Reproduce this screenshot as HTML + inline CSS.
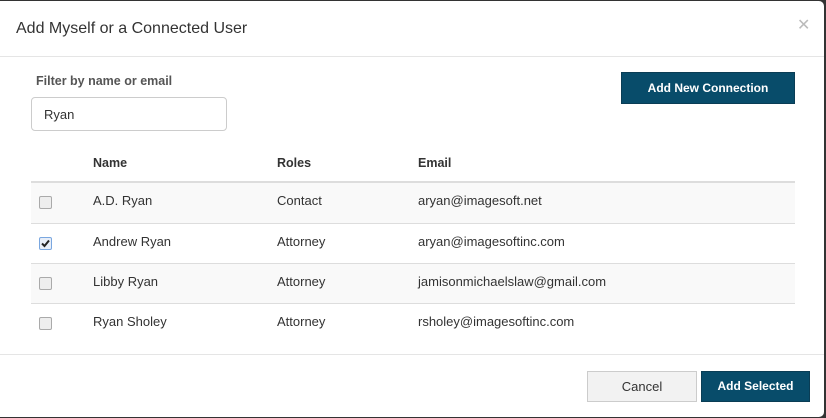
<!DOCTYPE html>
<html><head><style>
*{box-sizing:border-box;margin:0;padding:0}
body{width:826px;height:418px;background:#333;font-family:"Liberation Sans",sans-serif;overflow:hidden;position:relative}
.m{position:absolute;left:0;top:1px;width:824px;height:416px;background:#fff;border-radius:0 5px 5px 0}
.t{position:absolute;left:16px;top:19px;font-size:16px;color:#333}
.x{position:absolute;left:797px;top:14px;font-size:16px;color:#bbb}
.hl{position:absolute;left:0;width:824px;height:1px;background:#e5e5e5}
.lbl{position:absolute;left:36px;top:73px;font-size:12.5px;font-weight:bold;color:#555}
.in{position:absolute;left:31px;top:96px;width:196px;height:34px;border:1px solid #ccc;border-radius:4px;font-size:13px;color:#333;padding:9px 12px}
.btn{position:absolute;background:#084c6a;color:#fff;font-size:12px;font-weight:bold;text-align:center;border:1px solid #0a3d55}
.th{position:absolute;top:155px;font-size:12.5px;font-weight:bold;color:#333}
.row{position:absolute;left:31px;width:764px;height:40px;border-top:1px solid #ddd;font-size:13px;color:#333}
.row span{position:absolute;top:10px}
.cb{position:absolute;left:8px;top:13px;width:13px;height:13px;border:1px solid #aaa;border-radius:2px;background:#eee}
</style></head><body>
<div class="m">
<div class="t">Add Myself or a Connected User</div>
<div class="x">✕</div>
<div class="hl" style="top:55px"></div>
<div class="lbl">Filter by name or email</div>
<div class="in">Ryan</div>
<div class="btn" style="left:621px;top:71px;width:174px;height:32px;line-height:30px">Add New Connection</div>
<div class="th" style="left:93px">Name</div>
<div class="th" style="left:277px">Roles</div>
<div class="th" style="left:418px">Email</div>
<div style="position:absolute;left:31px;top:180px;width:764px;height:2px;background:#ddd"></div>
<div class="row" style="top:182px;background:#f9f9f9;border-top:0"><div class="cb"></div><span style="left:62px">A.D. Ryan</span><span style="left:246px">Contact</span><span style="left:387px">aryan@imagesoft.net</span></div>
<div class="row" style="top:222px"><div class="cb" style="border-color:#7aa7e0;background:#e8eef8"><svg width="11" height="11" viewBox="0 0 11 11" style="position:absolute;left:0;top:0"><path d="M2 5.5l2.5 2.5 4.5-5.5" stroke="#222" stroke-width="2" fill="none"/></svg></div><span style="left:62px">Andrew Ryan</span><span style="left:246px">Attorney</span><span style="left:387px">aryan@imagesoftinc.com</span></div>
<div class="row" style="top:262px;background:#f9f9f9"><div class="cb"></div><span style="left:62px">Libby Ryan</span><span style="left:246px">Attorney</span><span style="left:387px">jamisonmichaelslaw@gmail.com</span></div>
<div class="row" style="top:302px"><div class="cb"></div><span style="left:62px">Ryan Sholey</span><span style="left:246px">Attorney</span><span style="left:387px">rsholey@imagesoftinc.com</span></div>
<div class="hl" style="top:353px"></div>
<div class="btn" style="left:587px;top:370px;width:110px;height:31px;line-height:29px;background:#f2f2f2;color:#333;font-weight:normal;font-size:13px;border-color:#ccc">Cancel</div>
<div class="btn" style="left:701px;top:370px;width:109px;height:31px;line-height:29px">Add Selected</div>
</div>
</body></html>
